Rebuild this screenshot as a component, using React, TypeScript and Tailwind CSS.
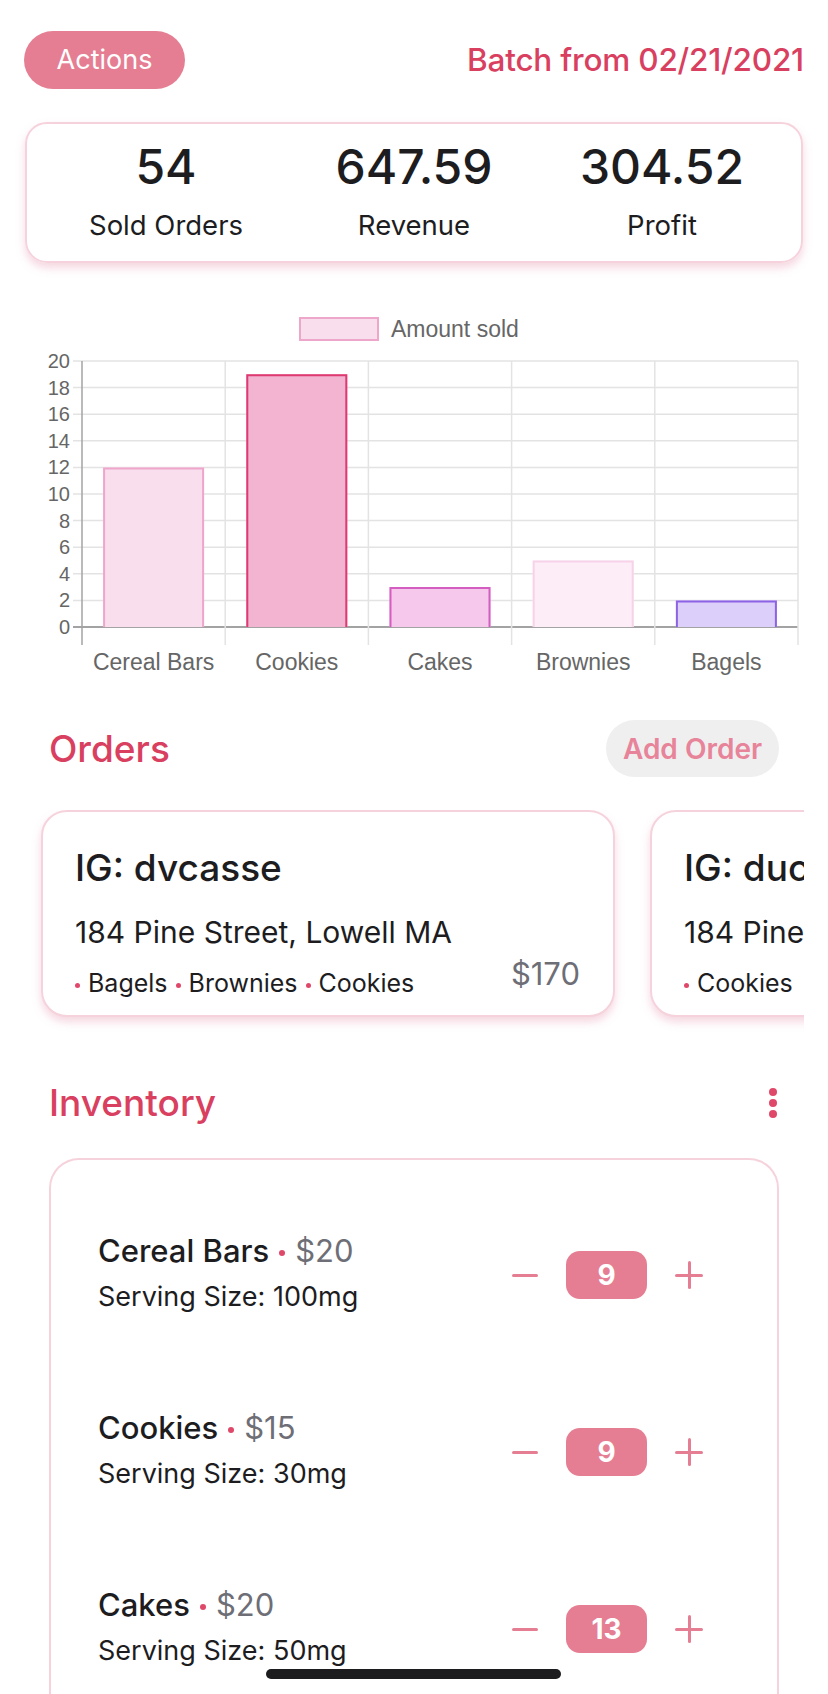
import React from 'react';

const bars = [
  { label: 'Cereal Bars', value: 12, fill: '#f9dfee', stroke: '#eea6ca' },
  { label: 'Cookies', value: 19, fill: '#f2b4d0', stroke: '#de3a72' },
  { label: 'Cakes', value: 3, fill: '#f6c8ec', stroke: '#d45dc2' },
  { label: 'Brownies', value: 5, fill: '#fcedf7', stroke: '#f7d3ea' },
  { label: 'Bagels', value: 2, fill: '#dcd0fa', stroke: '#8d63e6' },
];

const inventory = [
  { name: 'Cereal Bars', price: '$20', serving: '100mg', qty: 9 },
  { name: 'Cookies', price: '$15', serving: '30mg', qty: 9 },
  { name: 'Cakes', price: '$20', serving: '50mg', qty: 13 },
  { name: 'Brownies', price: '$10', serving: '40mg', qty: 7 },
];

function Chart() {
  // plot area in svg units: x 82..798, y 71 (20) .. 337 (0)
  const left = 82;
  const right = 798;
  const top = 71;
  const zero = 337;
  const unit = (zero - top) / 20;
  const col = (right - left) / 5;
  const ticks = [0, 2, 4, 6, 8, 10, 12, 14, 16, 18, 20];

  return (
    <svg width="828" height="390" viewBox="0 0 828 390" className="block">
      {/* legend */}
      <rect x="300" y="28" width="78" height="22" fill="#f9dfee" stroke="#eea6ca" strokeWidth="2" />
      <text x="391" y="47" fontSize="23" fill="#666" fontFamily="'Liberation Sans', Arial, sans-serif">
        Amount sold
      </text>

      {/* horizontal grid */}
      {ticks.map((t) => {
        const y = zero - t * unit;
        return (
          <g key={t}>
            <line x1={left - 9} x2={right} y1={y} y2={y} stroke={t === 0 ? '#a3a3a3' : '#e3e3e3'} strokeWidth={t === 0 ? 2 : 1.5} />
            <text
              x={left - 12}
              y={y + 7}
              fontSize="20"
              textAnchor="end"
              fill="#666"
              fontFamily="'Liberation Sans', Arial, sans-serif"
            >
              {t}
            </text>
          </g>
        );
      })}

      {/* vertical grid */}
      {[0, 1, 2, 3, 4, 5].map((i) => {
        const x = left + i * col;
        return (
          <line
            key={i}
            x1={x}
            x2={x}
            y1={top}
            y2={355}
            stroke={i === 0 ? '#a3a3a3' : '#e3e3e3'}
            strokeWidth="1.5"
          />
        );
      })}

      {/* bars */}
      {bars.map((b, i) => {
        const w = 101;
        const x = left + i * col + (col - w) / 2;
        const y = zero - b.value * unit;
        return (
          <g key={b.label}>
            <rect x={x} y={y} width={w} height={zero - y} fill={b.fill} />
            <path
              d={`M${x + 1} ${zero} V${y + 1} H${x + w - 1} V${zero}`}
              fill="none"
              stroke={b.stroke}
              strokeWidth="2"
            />
            <text
              x={left + i * col + col / 2}
              y={380}
              fontSize="23"
              textAnchor="middle"
              fill="#666"
              fontFamily="'Liberation Sans', Arial, sans-serif"
            >
              {b.label}
            </text>
          </g>
        );
      })}
    </svg>
  );
}

function Dot() {
  return <span className="inline-block w-[5px] h-[5px] rounded-full bg-[#e0486a] mx-[8px] align-middle" />;
}

function OrderCard({ handle, tags, price }: { handle: string; tags: string[]; price?: string }) {
  return (
    <div className="shrink-0 w-[574px] h-[207px] bg-white rounded-[26px] border-2 border-[#f6d3dc] shadow-[0_5px_9px_rgba(226,140,165,0.35)] pl-[32px] pr-[33px] pt-[28px]">
      <div className="text-[37px] leading-[56px] font-medium text-[#1d1d1f] whitespace-nowrap">IG: {handle}</div>
      <div className="mt-[18px] text-[30px] leading-[36px] text-[#1d1d1f] whitespace-nowrap">184 Pine Street, Lowell MA</div>
      <div className="mt-[4px] flex items-end justify-between">
        <div className="text-[25px] leading-[30px] text-[#1d1d1f] whitespace-nowrap -ml-[8px]">
          {tags.map((t) => (
            <span key={t}>
              <Dot />
              {t}
            </span>
          ))}
        </div>
        {price && <div className="text-[31px] leading-[40px] text-[#6e6e76] mb-[4px]">{price}</div>}
      </div>
    </div>
  );
}

function Stepper({ qty }: { qty: number }) {
  return (
    <div className="flex items-center">
      <div className="w-[26px] h-[3px] bg-[#e57e93] rounded-full" />
      <div className="ml-[28px] w-[81px] h-[48px] rounded-[14px] bg-[#e57e93] flex items-center justify-center text-white text-[28px] font-bold">
        {qty}
      </div>
      <div className="ml-[28px] relative w-[28px] h-[28px]">
        <div className="absolute left-0 top-[12.5px] w-[28px] h-[3px] bg-[#e57e93] rounded-full" />
        <div className="absolute top-0 left-[12.5px] w-[3px] h-[28px] bg-[#e57e93] rounded-full" />
      </div>
    </div>
  );
}

export default function App() {
  return (
    <div className="relative w-[828px] h-[1694px] overflow-hidden bg-white font-['Inter',sans-serif] text-[#1d1d1f]">
      {/* top bar */}
      <div className="flex items-center justify-between px-[24px] pt-[31px]">
        <button className="w-[161px] h-[58px] rounded-full bg-[#e57e93] text-white text-[27px]">Actions</button>
        <div className="text-[31.5px] font-medium text-[#d9405f] tracking-[-0.2px]">Batch from 02/21/2021</div>
      </div>

      {/* stats */}
      <div className="mx-[25px] mt-[33px] h-[141px] rounded-[22px] border-2 border-[#f6d3dc] shadow-[0_5px_9px_rgba(226,140,165,0.35)] grid grid-cols-3 px-[15px] pt-[14px]">
        {[
          ['54', 'Sold Orders'],
          ['647.59', 'Revenue'],
          ['304.52', 'Profit'],
        ].map(([n, l]) => (
          <div key={l} className="flex flex-col items-center">
            <div className="text-[48px] leading-[58px] font-medium text-[#1d1d1f]">{n}</div>
            <div className="mt-[12px] text-[27.5px] leading-[34px] text-[#1d1d1f]">{l}</div>
          </div>
        ))}
      </div>

      {/* chart */}
      <div className="mt-[27px]">
        <Chart />
      </div>

      {/* orders */}
      <div className="mt-[40px] flex items-center justify-between pl-[49px] pr-[49px]">
        <h2 className="text-[37px] font-medium text-[#d9405f]">Orders</h2>
        <button className="w-[173px] h-[57px] rounded-full bg-[#efeff0] text-[28px] font-semibold text-[#e8849a]">
          Add Order
        </button>
      </div>

      <div className="ml-[24px] w-[780px] overflow-hidden mt-[33px] pb-[16px]">
        <div className="flex gap-[35px] pl-[17px]">
          <OrderCard handle="dvcasse" tags={['Bagels', 'Brownies', 'Cookies']} price="$170" />
          <OrderCard handle="duckie.bakes" tags={['Cookies']} price="$45" />
        </div>
      </div>

      {/* inventory */}
      <div className="mt-[42px] flex items-center justify-between pl-[49px] pr-[51px]">
        <h2 className="text-[37px] font-medium text-[#d9405f]">Inventory</h2>
        <div className="flex flex-col gap-[3px]">
          <span className="w-[8px] h-[8px] rounded-full bg-[#e0486a]" />
          <span className="w-[8px] h-[8px] rounded-full bg-[#e0486a]" />
          <span className="w-[8px] h-[8px] rounded-full bg-[#e0486a]" />
        </div>
      </div>

      <div className="mx-[49px] mt-[27px] rounded-t-[30px] border-2 border-b-0 border-[#f6d3dc] pt-[27px] pl-[47px] pr-[74px]">
        {inventory.map((item) => (
          <div key={item.name} className="h-[177px] flex items-center justify-between">
            <div className="mb-[6px]">
              <div className="text-[31px] leading-[42px] font-medium whitespace-nowrap">
                {item.name}
                <span className="inline-block w-[6px] h-[6px] rounded-full bg-[#e0486a] mx-[10px] align-middle" />
                <span className="font-normal text-[#6e6e76]">{item.price}</span>
              </div>
              <div className="mt-[7px] text-[27px] leading-[36px]">Serving Size: {item.serving}</div>
            </div>
            <Stepper qty={item.qty} />
          </div>
        ))}
      </div>

      {/* home indicator */}
      <div className="absolute left-[266px] bottom-[15px] w-[295px] h-[10px] rounded-full bg-[#1c1c1e]" />
    </div>
  );
}
